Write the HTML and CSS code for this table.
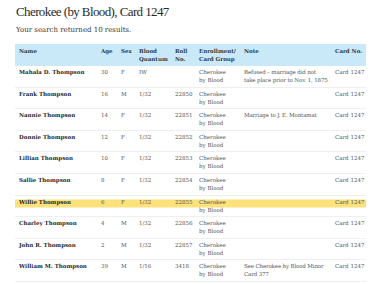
FILE: index.html
```html
<!DOCTYPE html>
<html lang="en">
<head>
<meta charset="utf-8">
<title>Cherokee (by Blood), Card 1247</title>
<link rel="stylesheet" href="styles.css">
</head>
<body>
<main class="page">
  <h1 class="title">Cherokee (by Blood), Card 1247</h1>
  <p class="summary">Your search returned 10 results.</p>
  <table class="results">
    <colgroup>
      <col class="c-name"><col class="c-age"><col class="c-sex"><col class="c-blood"><col class="c-roll"><col class="c-enroll"><col class="c-note"><col class="c-card">
    </colgroup>
    <thead>
      <tr><th>Name</th><th>Age</th><th>Sex</th><th>Blood Quantum</th><th>Roll No.</th><th>Enrollment/ Card Group</th><th>Note</th><th class="card">Card No.</th></tr>
    </thead>
    <tbody>
      <tr><td class="name">Mahala D. Thompson</td><td>30</td><td>F</td><td>IW</td><td></td><td>Cherokee<br>by Blood</td><td class="note">Refused – marriage did not<br>take place prior to Nov. 1, 1875</td><td class="card">Card 1247</td></tr>
      <tr><td class="name">Frank Thompson</td><td>16</td><td>M</td><td>1/32</td><td>22850</td><td>Cherokee<br>by Blood</td><td class="note"></td><td class="card">Card 1247</td></tr>
      <tr><td class="name">Nannie Thompson</td><td>14</td><td>F</td><td>1/32</td><td>22851</td><td>Cherokee<br>by Blood</td><td class="note">Marriage to J. E. Montamat</td><td class="card">Card 1247</td></tr>
      <tr><td class="name">Donnie Thompson</td><td>12</td><td>F</td><td>1/32</td><td>22852</td><td>Cherokee<br>by Blood</td><td class="note"></td><td class="card">Card 1247</td></tr>
      <tr><td class="name">Lillian Thompson</td><td>10</td><td>F</td><td>1/32</td><td>22853</td><td>Cherokee<br>by Blood</td><td class="note"></td><td class="card">Card 1247</td></tr>
      <tr><td class="name">Sallie Thompson</td><td>8</td><td>F</td><td>1/32</td><td>22854</td><td>Cherokee<br>by Blood</td><td class="note"></td><td class="card">Card 1247</td></tr>
      <tr class="highlight"><td class="name">Willie Thompson</td><td>6</td><td>F</td><td>1/32</td><td>22855</td><td>Cherokee<br>by Blood</td><td class="note"></td><td class="card">Card 1247</td></tr>
      <tr><td class="name">Charley Thompson</td><td>4</td><td>M</td><td>1/32</td><td>22856</td><td>Cherokee<br>by Blood</td><td class="note"></td><td class="card">Card 1247</td></tr>
      <tr><td class="name">John R. Thompson</td><td>2</td><td>M</td><td>1/32</td><td>22857</td><td>Cherokee<br>by Blood</td><td class="note"></td><td class="card">Card 1247</td></tr>
      <tr><td class="name">William M. Thompson</td><td>39</td><td>M</td><td>1/16</td><td>3418</td><td>Cherokee<br>by Blood</td><td class="note">See Cherokee by Blood Minor Card 377</td><td class="card">Card 1247</td></tr>
    </tbody>
  </table>
</main>
</body>
</html>
```

FILE: styles.css
```css
html, body {
  margin: 0;
  padding: 0;
  background: #ffffff;
}

.page {
  padding: 4px 0 0 16px;
  font-family: "DejaVu Serif", "Liberation Serif", serif;
  color: #333333;
}

.title {
  margin: 0;
  font-family: "Liberation Serif", serif;
  font-weight: normal;
  font-size: 13px;
  line-height: 16px;
  letter-spacing: -0.6px;
  color: #2b2b2b;
}

.summary {
  margin: 4px 0 0 0;
  font-size: 7px;
  line-height: 12px;
  color: #333333;
}

.results {
  margin: 8px 0 0 -1px;
  width: 351px;
  table-layout: fixed;
  border-collapse: collapse;
  font-size: 5.5px;
  line-height: 8px;
}

.c-name { width: 82px; }
.c-age { width: 20px; }
.c-sex { width: 18px; }
.c-blood { width: 36px; }
.c-roll { width: 24px; }
.c-enroll { width: 45px; }
.c-note { width: 91px; }
.c-card { width: 35px; }

.results th {
  background: #c9e8f8;
  text-align: left;
  vertical-align: top;
  font-weight: bold;
  color: #2e3a44;
  padding: 2.6px 2px 3.4px 4px;
}

.results td {
  vertical-align: top;
  color: #555555;
  padding: 2px 2px 2.6px 4px;
  border-bottom: 1px solid #efefef;
}

.results td.name {
  font-weight: bold;
  color: #2a2a2a;
}

.results td.note {
  padding-right: 0;
  letter-spacing: -0.15px;
}

.results .card {
  white-space: nowrap;
  padding-right: 0;
}

.results tr.highlight td {
  background: linear-gradient(to bottom, transparent 4px, #fde17a 4px, #fde17a 12.5px, transparent 12.5px);
}
```
